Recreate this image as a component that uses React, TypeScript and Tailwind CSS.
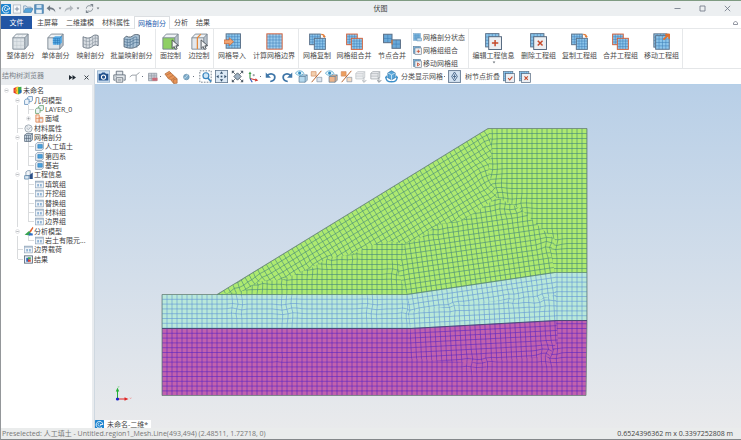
import { useState, type ReactNode } from 'react';

// ---------- Icons ----------
const Svg = ({ children, className = 'size-4' }: { children: ReactNode; className?: string }) => (
  <svg className={`shrink-0 ${className}`} viewBox="0 0 16 16" fill="none" aria-hidden="true">
    {children}
  </svg>
);

type GridProps = { x: number; y: number; s: number; n?: number; fill?: string; line?: string; edge?: string };

const GridBox = ({ x, y, s, n = 4, fill = '#8cc6ec', line = '#3d7db5', edge = '#5a7088' }: GridProps) => {
  let d = '';
  for (let i = 1; i < n; i++) {
    const o = (s / n) * i;
    d += `M${x + o} ${y}v${s}M${x} ${y + o}h${s}`;
  }
  return (
    <>
      <rect x={x} y={y} width={s} height={s} fill={fill} />
      <path d={d} stroke={line} strokeWidth="0.5" />
      <rect x={x} y={y} width={s} height={s} stroke={edge} strokeWidth="0.9" />
    </>
  );
};

const CubeShell = ({ front = '#dfe4e8' }: { front?: string }) => (
  <>
    <path d="M0.8 4.5 4 1h11.2v10.5L12 15.2H0.8z" fill="#eef1f4" />
    <path d="M0.8 4.5H12v10.7H0.8z" fill={front} />
    <path d="M12 4.5 15.2 1v10.5L12 15.2z" fill="#b9c3cc" />
    <path d="M0.8 4.5 4 1h11.2v10.5L12 15.2H0.8zM0.8 4.5H12v10.7M12 4.5 15.2 1" stroke="#76828e" strokeWidth="0.8" />
  </>
);

const WholeMeshIcon = () => (
  <Svg className="size-[17px]">
    <CubeShell />
    <path d="M4.5 4.5v10.7M8.3 4.5v10.7M0.8 8H12M0.8 11.6H12M4.5 4.5l3-3.5M8.3 4.5l3-3.5" stroke="#b5bec6" strokeWidth="0.4" />
  </Svg>
);
const SingleMeshIcon = () => (
  <Svg className="size-[17px]">
    <CubeShell />
    <path d="M5.5 5 7.5 3H14v6l-2 2H5.5z" fill="#58abe4" />
    <path d="M5.5 5H12v6M12 5l2-2M7.7 5v6M9.9 5v6M5.5 7H12M5.5 9H12" stroke="#2473b5" strokeWidth="0.5" />
  </Svg>
);
const SurfaceIcon = ({ fill, line }: { fill: string; line: string }) => (
  <Svg className="size-[17px]">
    <path d="M1 3.5C5 5.5 8 5 10.500 2.500 12.500 1.500 14 2 15.200 2.500V12C13 10.800 11.500 11 10 12.500 7 15 4 14.500 1 13.200z" fill={fill} stroke="#6c7884" strokeWidth="0.9" />
    <path d="M4 4.500v9.700M7 4.500v9.700M10 3v9.500M12.500 2v9.200M1 6.700c4 2 7 1.500 9.500-1 2-1.500 3.500-1 4.700-.5M1 10c4 2 7 1.500 9.500-1 2-1.500 3.500-1 4.700-.5" stroke={line} strokeWidth="0.6" />
  </Svg>
);
const BatchIcon = () => (
  <Svg className="size-[17px]">
    <path d="M3 3c3 1.500 5 1 7-1 2-1 4-.5 5.400 0v9l-3 2C9 15 5 14.500 1 13V5z" fill="#a9c2d6" stroke="#566573" strokeWidth="0.9" />
    <path d="M1 5.500c4 1.500 6 1 8-.5s3-1.500 4-1v10M4 5.500v8.500M6.700 5.500v8.500M9.500 4.500v9.300M1 8c4 1.500 6 1 8-.5s3-1.500 6-1M1 10.700c4 1.500 6 1 8-.5s3-1.500 6-1" stroke="#4b6f90" strokeWidth="0.6" />
  </Svg>
);
const Cursor = () => <path d="M9.500 6.500v8l2-1.800 1.300 2.900 1.500-.7-1.300-2.800 2.600-.2z" fill="#f4f5f6" stroke="#3d444b" strokeWidth="0.8" />;
const FaceControlIcon = () => (
  <Svg className="size-[17px]">
    <CubeShell front="#8ecf63" />
    <Cursor />
  </Svg>
);
const EdgeControlIcon = () => (
  <Svg className="size-[17px]">
    <CubeShell front="#e4e8ec" />
    <path d="M6 15V4.500L9.300 1" stroke="#e58a3c" strokeWidth="1.200" />
    <Cursor />
  </Svg>
);
const ImportIcon = () => (
  <Svg className="size-[17px]">
    <GridBox x={2} y={0.800} s={13.500} n={5} />
    <path d="M0 6.500h5V4.500l4 3.700-4 3.600V10H0z" fill="#f0a573" stroke="#cc5f2a" strokeWidth="0.6" />
  </Svg>
);
const BoundaryIcon = () => (
  <Svg className="size-[17px]">
    <GridBox x={0.800} y={0.800} s={14.400} n={5} edge="#d2603a" fill="#9bcbed" />
  </Svg>
);
const CopyGridIcon = () => (
  <Svg className="size-[17px]">
    <GridBox x={0.600} y={1} s={10} />
    <GridBox x={5} y={5} s={10.400} />
    <path d="M11.500 1.200c2.200 0 3 .8 3 2.500" stroke="#e07a35" strokeWidth="1.200" />
    <path d="M12.800 2.800h3l-1.400 2z" fill="#e07a35" />
  </Svg>
);
const MergeGridIcon = () => (
  <Svg className="size-[17px]">
    <GridBox x={0.600} y={1} s={10} edge="#d2603a" />
    <GridBox x={5} y={5} s={10.400} edge="#d2603a" />
  </Svg>
);
const NodeMergeIcon = () => (
  <Svg className="size-[18px]">
    <GridBox x={0.500} y={2} s={7.500} n={2} fill="#6aa9d8" />
    <GridBox x={8} y={7} s={7.500} n={2} fill="#6aa9d8" />
    <path d="M8 7v4" stroke="#e07a35" />
  </Svg>
);
const CardMarkIcon = ({ mark, className = 'size-[17px]' }: { mark: string; className?: string }) => (
  <Svg className={className}>
    <GridBox x={0.600} y={0.600} s={12.500} fill="#8cc6ec" />
    <rect x="3.500" y="3.500" width="12" height="12" fill="#eceff3" stroke="#51657c" strokeWidth="0.9" />
    <path d={mark} stroke="#c5492a" strokeWidth="1.400" />
  </Svg>
);
const PLUS = 'M9.500 6.500v6M6.500 9.500h6';
const CROSS = 'M7.300 7.300l4.500 4.500M11.800 7.300 7.300 11.800';
const CHECK = 'M6.800 9.500l2.200 2.300L12.500 7.500';
const PLAY = 'M8 7l4 2.700-4 2.700z';
const MoveGroupIcon = () => (
  <Svg className="size-[17px]">
    <GridBox x={0.800} y={0.800} s={12.500} />
    <GridBox x={2.500} y={2.500} s={12.800} />
    <path d="M9.800 6.200 15.500.8M11.500 1.500h3.800v3.800" stroke="#e2702c" strokeWidth="1.800" />
  </Svg>
);
const StateIcon = () => (
  <Svg className="size-[9px]">
    <GridBox x={1} y={1} s={12} n={3} fill="#79b4de" edge="#6f9fc4" />
    <path d="M7 9h8v5H7z" fill="#c3dff2" stroke="#5b8db5" />
  </Svg>
);

const LogoIcon = ({ className = 'size-[10px]' }: { className?: string }) => (
  <Svg className={className}>
    <rect width="16" height="16" rx="1" fill="#1d84cf" />
    <path d="M12.500 12.500A6 6 0 1 1 14 8H9" stroke="#fff" strokeWidth="1.500" />
    <path d="M10.800 8.500A2.800 2.800 0 1 1 8 5.200" stroke="#fff" strokeWidth="1.200" />
  </Svg>
);
const NewIcon = () => (
  <Svg className="size-[10px]">
    <rect x="2" y="1.500" width="12" height="13" fill="#f7f9fb" stroke="#97a6b5" />
    <path d="M8 4.500v7M4.500 8h7" stroke="#6e8196" strokeWidth="1.300" />
  </Svg>
);
const OpenIcon = () => (
  <Svg className="size-[10px]">
    <path d="M1 13V3h4l1.500 2H13v2" fill="#dfe8f0" stroke="#5f86a8" />
    <path d="M1 13.500 4 7h12l-3 6.500z" fill="#58a5da" stroke="#3c7cae" />
  </Svg>
);
const SaveIcon = () => (
  <Svg className="size-[10px]">
    <path d="M1 1h14v14H1z" fill="#5a93c2" stroke="#41749f" />
    <path d="M4 1.500h8v5H4z" fill="#cfe2f1" />
    <path d="M3.500 9h9v6h-9z" fill="#e9f1f7" />
  </Svg>
);
const ArrowBack = ({ color, flip }: { color: string; flip?: boolean }) => (
  <Svg className={flip ? 'size-[10px] -scale-x-100' : 'size-[10px]'}>
    <path d="M6.500 2 1 6.800l5.500 4.700V8.500c4 0 6.500 1.500 8.500 5 0-5-3-8-8.500-8.300z" fill={color} />
  </Svg>
);
const SyncIcon = () => (
  <Svg className="size-[9px]">
    <path d="M2.500 8c0-4 4-6.500 8.500-4M13.500 8c0 4-4 6.500-8.500 4" stroke="#7c858e" strokeWidth="1.700" />
    <path d="M9 0h5.500v6zM7 16H1.500v-6z" fill="#7c858e" />
  </Svg>
);
const Caret = () => (
  <Svg className="h-[3px] w-1">
    <path d="M1 3h14l-7 10z" fill="#6d747b" />
  </Svg>
);

// ---------- View toolbar icons ----------
const CameraIcon = () => (
  <Svg className="size-[13px]">
    <rect x="0.500" y="1" width="15" height="14" fill="#cfe2f4" stroke="#8aa9c8" />
    <path d="M2 4.500h3L6.500 3h3L11 4.500h3v8.500H2z" fill="#20508c" />
    <circle cx="8" cy="8.700" r="3.200" fill="#fff" />
    <circle cx="8" cy="8.700" r="2" fill="#20508c" />
  </Svg>
);
const PrinterIcon = () => (
  <Svg className="size-[13px]">
    <path d="M4 6V1.500h8V6M3 12.500H1V6h14v6.500h-2" fill="#e5e9ed" stroke="#5a6672" />
    <path d="M4 9.500h8V15H4z" fill="#fff" stroke="#5a6672" />
    <path d="M5.500 11.500h5M5.500 13.200h5M3 7.800h1.500" stroke="#5a6672" strokeWidth="0.7" />
  </Svg>
);
const ElbowIcon = () => (
  <Svg className="size-[12px]">
    <path d="M1 8l3-2.500h5.500L14 2M9.500 5.500V14" stroke="#9aa1a8" strokeWidth="1.300" />
  </Svg>
);
const FilterIcon = () => (
  <Svg className="size-[12px]">
    <path d="M2 3h11v10H2z" fill="#c6ccd4" stroke="#8d96a0" />
    <path d="M2 6.500h11M2 10h11M6 3v10M9.500 3v10" stroke="#8d96a0" strokeWidth="0.7" />
    <path d="M7 9h7v4H7z" fill="#c96b79" />
  </Svg>
);
const PlanesIcon = () => (
  <Svg className="size-[14px]">
    <path d="M1 4.500 6 1.500l9 8.500v5l-4 .5L7.500 11 5 10z" fill="#e99558" stroke="#a9683c" strokeWidth="0.8" />
    <path d="M2.500 6 8 3.300M5 9l5.500-3M8 11.500l5-3.200M11 15v-4l4-1" stroke="#a9683c" strokeWidth="0.7" />
  </Svg>
);
const SphereIcon = () => (
  <Svg className="size-[10px]">
    <circle cx="7" cy="8" r="4.500" fill="#7eaccb" stroke="#5d87a3" />
    <path d="M3 10c3-1 5-3 6-6" stroke="#d6e8f3" strokeWidth="1.200" />
  </Svg>
);
const ZoomBoxIcon = () => (
  <Svg className="size-[13px]">
    <rect x="1" y="1" width="14" height="14" stroke="#5d6a77" strokeDasharray="2 1.500" />
    <circle cx="8.500" cy="7" r="3.600" fill="#cfe6f6" stroke="#3a86c0" strokeWidth="1.500" />
    <path d="m11 10 4 4.500" stroke="#3a86c0" strokeWidth="2" />
  </Svg>
);
const FitIcon = () => (
  <Svg className="size-[13px]">
    <rect x="0.500" y="0.500" width="15" height="15" fill="#dce9f5" stroke="#62788f" />
    <path d="M8 1.500l2 3H6zM8 14.500l2-3H6zM1.500 8l3-2v4zM14.500 8l-3-2v4z" fill="#34506c" />
    <path d="M7 7h2v2H7z" fill="#34506c" />
  </Svg>
);
const PanIcon = () => (
  <Svg className="size-[13px]">
    <path d="M8 3.500 12.500 8 8 12.500 3.500 8z" fill="#9fb1c2" stroke="#4b5763" />
    <path d="M1 1h3.500L1 4.500zM15 1h-3.500L15 4.500zM1 15h3.500L1 11.500zM15 15h-3.500l3.500-3.500z" fill="#4b5763" />
    <path d="m1.500 1.500 4 4M14.500 1.500l-4 4M1.500 14.500l4-4M14.500 14.500l-4-4" stroke="#4b5763" />
  </Svg>
);
const AxesIcon = () => (
  <Svg className="size-[12px]">
    <path d="M4 10V3" stroke="#3e9c48" strokeWidth="1.500" />
    <path d="m4 10 8 2" stroke="#d23b33" strokeWidth="1.500" />
    <path d="m4 10 3 5" stroke="#2f58b8" strokeWidth="1.500" />
    <path d="M2 4l2-3.500L6 4z" fill="#3e9c48" />
    <path d="M11.500 9.500l3.500 3-4.500 1.500z" fill="#d23b33" />
    <path d="M9 4v3M7.500 5.500h3" stroke="#7b848c" />
  </Svg>
);
const RotateIcon = ({ flip }: { flip?: boolean }) => (
  <Svg className={flip ? 'size-[12px] -scale-x-100' : 'size-[12px]'}>
    <path d="M3 6c5-4 11-1.500 10 3.500-.5 2.500-2.500 4-6 4.500" stroke="#3f76a8" strokeWidth="2.300" />
    <path d="M1 2v7h7z" fill="#3f76a8" />
  </Svg>
);
const EyeCubeIcon = ({ body }: { body: string }) => (
  <Svg className="size-[13px]">
    <path d="M5 8l2.500-2H15v6.500L12.500 15H5z" fill={body} stroke="#5f7f9b" strokeWidth="0.9" />
    <path d="M5 8h7.500v7M12.500 8 15 6" stroke="#5f7f9b" strokeWidth="0.9" />
    <path d="M0.500 4c2.500-4 8-4 10.500 0-2.500 3.500-8 3.500-10.500 0z" fill="#e8f5fb" stroke="#4aa0cb" strokeWidth="0.900" />
    <circle cx="5.700" cy="3.800" r="1.900" fill="#2f8bc0" />
  </Svg>
);
const SwapIcon = ({ a, b }: { a: string; b: string }) => (
  <Svg className="size-[13px]">
    <path d="M1.500 2h6v5.500h-6z" fill={a} stroke="#d08a5e" strokeWidth="0.8" />
    <path d="M8.500 9h6v5.500h-6z" fill={b} stroke="#7f90a3" strokeWidth="0.8" />
    <path d="M14 1 2 15" stroke="#b5632f" strokeWidth="1.200" />
  </Svg>
);
const GrayCubeIcon = ({ edge }: { edge: string }) => (
  <Svg className="size-[13px]">
    <path d="M1 4l2.500-2H12v7l-2 2H1z" fill="#eceef0" stroke={edge} />
    <path d="M1 4.500h9V11M10 4.500 12 2M1 7.500h9" stroke={edge} strokeWidth="0.8" />
    <path d="M11 8.500v6M9 12.500l2 2.500 3-2.500" stroke={edge} strokeWidth="1.300" />
  </Svg>
);
const BlueCubeIcon = () => (
  <Svg className="size-[13px]">
    <path d="M8 1l4.500 2.500v6L8 12 3.500 9.500v-6z" fill="#58a6da" stroke="#2d6e9f" strokeWidth="0.8" />
    <path d="M3.500 3.500 8 6l4.500-2.500M8 6v6" stroke="#e3f1fa" strokeWidth="0.9" />
    <path d="M1 8.500c0 4 3 6 7 6s7-2 7-6" stroke="#3b8fc9" strokeWidth="1.700" />
    <path d="M0 9.500 1.500 6.500l2 3zM12.500 9.500l2-3L16 9.500z" fill="#3b8fc9" />
  </Svg>
);
const FoldIcon = () => (
  <Svg className="size-[13px]">
    <rect x="0.700" y="0.700" width="14.600" height="14.600" fill="#d4e3f2" stroke="#6b8098" strokeWidth="1.200" />
    <path d="M8 2.500 11.500 8 8 13.500 4.500 8z" stroke="#4f6d8f" strokeWidth="1.200" />
    <path d="M8 5.500v5M6 8h4" stroke="#4f6d8f" strokeWidth="1.200" />
  </Svg>
);

// ---------- Tree icons ----------
const RootIcon = () => (
  <Svg className="size-[9px]">
    <path d="M1 4 8 1v14L1 12z" fill="#e2382c" />
    <path d="M5 2.500 11 1v14l-6-2z" fill="#f4d22f" />
    <path d="M9 2l6-.5V11l-6 4z" fill="#3da84c" />
    <path d="M11.500 7H15v5l-3.500 2z" fill="#2769c0" />
    <circle cx="5" cy="8" r="2.300" fill="#ef8a2b" />
  </Svg>
);
const BoxesIcon = ({ color }: { color: string }) => (
  <Svg className="size-[9px]">
    <path d="M6 3.500 8 1h7v7l-2.500 2H6z" fill="#eef4fa" stroke={color} strokeWidth="1.300" />
    <path d="M1 8l2-2.500h6V13l-2 2H1z" fill="#eef4fa" stroke={color} strokeWidth="1.300" />
  </Svg>
);
const RegionIcon = () => (
  <Svg className="size-[9px]">
    <path d="M1.500 1.500h6v13h-6z" fill="#fbe3d2" stroke="#dc7a45" strokeWidth="1.300" />
    <path d="M7.500 6h6.500v8.500H7.500z" fill="#e6ecf2" stroke="#dc7a45" strokeWidth="1.300" />
    <path d="M1.500 8h12" stroke="#dc7a45" />
  </Svg>
);
const MaterialIcon = () => (
  <Svg className="size-[9px]">
    <circle cx="8" cy="8" r="6.500" fill="#eef1f4" stroke="#8d99a5" strokeWidth="1.300" />
    <path d="M4.500 7.500 8 10l4-5M5 4l2 2" stroke="#8d99a5" strokeWidth="1.200" />
  </Svg>
);
const MeshIcon = () => (
  <Svg className="size-[9px]">
    <path d="M1 4 4 1h11v11l-3 3H1z" fill="#d3dfea" stroke="#46586b" strokeWidth="1.200" />
    <path d="M1 4h11v11M12 4l3-3M4.700 4v11M8.300 4v11M1 9.500h11" stroke="#46586b" strokeWidth="1.100" />
  </Svg>
);
const PartIcon = () => (
  <Svg className="size-[9px]">
    <path d="M1 4 4 1h11v11l-3 3H1z" fill="#e7edf3" stroke="#71879c" strokeWidth="1.100" />
    <path d="M5 4.500h8V11H5z" fill="#4ba3df" stroke="#2b78b4" />
  </Svg>
);
const ProjectIcon = () => (
  <Svg className="size-[10px]">
    <path d="M3 7V3l3-2h4v8H3z" fill="#f0f4f8" stroke="#5d7a96" />
    <path d="M1 9h7v5.500H1z" fill="#dbe8f3" stroke="#3c6d96" />
    <path d="M9 8l5-4v10.500H9z" fill="#2b4f87" />
  </Svg>
);
const GroupIcon = () => (
  <Svg className="h-[9px] w-[9px]">
    <rect x="0.700" y="2" width="14.600" height="12" fill="#eef3f8" stroke="#8fa5bb" strokeWidth="1.200" />
    <path d="M1 3.500h14" stroke="#8fa5bb" strokeWidth="1.700" />
    <path d="M4 7h3v4.500H4zM9 7h3v4.500H9z" fill="#8fb2d4" />
  </Svg>
);
const AnalysisIcon = () => (
  <Svg className="size-[10px]">
    <path d="M8 9 14 1l1 2-4 7z" fill="#e2602c" />
    <path d="M1 14 8 8l3 3-2 4z" fill="#38a350" />
    <path d="M9 11l5 1v3H7z" fill="#2f6cc4" />
  </Svg>
);
const ResultIcon = () => (
  <Svg className="size-[9px]">
    <rect x="1" y="1.500" width="14" height="13" fill="#e9eef3" stroke="#57697b" strokeWidth="1.500" />
    <path d="M4 5h5v7H4z" fill="#2c66bf" />
    <path d="M7 4h5v4H7z" fill="#3fa75a" />
    <path d="M7 8h5v4H7z" fill="#e0402f" />
  </Svg>
);

// ---------- Ribbon ----------
const TABS = ['主屏幕', '二维建模', '材料属性', '网格剖分', '分析', '结果'];

const Tool = ({ label, width, icon, menu }: { label: string; width: string; icon: ReactNode; menu?: boolean }) => (
  <button type="button" className={`flex flex-col items-center pt-[3px] whitespace-nowrap hover:bg-sky-50 ${width}`}>
    <span className="flex h-[18px] items-center">{icon}</span>
    <span className="leading-[11px]">{label}</span>
    {menu && <Caret />}
  </button>
);

const SmallTool = ({ label, icon }: { label: string; icon: ReactNode }) => (
  <button type="button" className="flex items-center gap-px leading-[13px] whitespace-nowrap">
    {icon}
    <span>{label}</span>
  </button>
);

const Group = ({ children }: { children: ReactNode }) => (
  <div className="flex shrink-0 border-r border-[#e6e8ea]">{children}</div>
);

const Ribbon = () => (
  <div className="flex h-10 shrink-0 border-b border-[#e4e6e8] bg-white pl-[2px] text-[#4c4c4c]">
    <Group>
      <Tool label="整体剖分" width="w-[35px]" icon={<WholeMeshIcon />} />
      <Tool label="单体剖分" width="w-[35px]" icon={<SingleMeshIcon />} />
      <Tool label="映射剖分" width="w-[35px]" icon={<SurfaceIcon fill="#d9dee3" line="#8b96a1" />} />
      <Tool label="批量映射剖分" width="w-[47px]" icon={<BatchIcon />} />
    </Group>
    <Group>
      <Tool label="面控制" width="w-[29px]" icon={<FaceControlIcon />} />
      <Tool label="边控制" width="w-[28px]" icon={<EdgeControlIcon />} />
    </Group>
    <Group>
      <Tool label="网格导入" width="w-[36px]" icon={<ImportIcon />} />
      <Tool label="计算网格边界" width="w-[48px]" icon={<BoundaryIcon />} />
    </Group>
    <Group>
      <Tool label="网格复制" width="w-[36px]" icon={<CopyGridIcon />} />
      <Tool label="网格组合并" width="w-[38px]" icon={<MergeGridIcon />} />
      <Tool label="节点合并" width="w-[38px]" icon={<NodeMergeIcon />} />
    </Group>
    <Group>
      <div className="flex w-14 flex-col pt-[2px] pl-px">
        <SmallTool label="网格剖分状态" icon={<StateIcon />} />
        <SmallTool label="网格组组合" icon={<CardMarkIcon mark={PLUS} className="size-[9px]" />} />
        <SmallTool label="移动网格组" icon={<CardMarkIcon mark={PLAY} className="size-[9px]" />} />
      </div>
    </Group>
    <Group>
      <Tool label="编辑工程信息" width="w-[49px]" icon={<CardMarkIcon mark={PLUS} />} menu />
      <Tool label="删除工程组" width="w-[41px]" icon={<CardMarkIcon mark={CROSS} />} />
      <Tool label="复制工程组" width="w-[41px]" icon={<CopyGridIcon />} />
      <Tool label="合并工程组" width="w-[41px]" icon={<MergeGridIcon />} />
      <Tool label="移动工程组" width="w-[41px]" icon={<MoveGroupIcon />} />
    </Group>
  </div>
);

const ViewButton = ({ name, children, menu }: { name: string; children: ReactNode; menu?: boolean }) => (
  <button
    type="button"
    aria-label={name}
    className={`flex h-full shrink-0 items-center justify-center ${menu ? 'w-[18px]' : 'w-[16px]'}`}
  >
    {children}
    {menu && <span className="ml-px size-px bg-gray-500" />}
  </button>
);

const ViewToolbar = () => (
  <div className="flex h-4 shrink-0 items-center border-b border-[#b4cfe8] bg-white text-[#4c4c4c]">
    <ViewButton name="截图"><CameraIcon /></ViewButton>
    <ViewButton name="打印"><PrinterIcon /></ViewButton>
    <ViewButton name="选择" menu><ElbowIcon /></ViewButton>
    <ViewButton name="过滤" menu><FilterIcon /></ViewButton>
    <ViewButton name="平面"><PlanesIcon /></ViewButton>
    <ViewButton name="渲染" menu><SphereIcon /></ViewButton>
    <ViewButton name="框选缩放"><ZoomBoxIcon /></ViewButton>
    <ViewButton name="适应窗口"><FitIcon /></ViewButton>
    <ViewButton name="平移"><PanIcon /></ViewButton>
    <ViewButton name="坐标系" menu><AxesIcon /></ViewButton>
    <ViewButton name="逆时针旋转"><RotateIcon /></ViewButton>
    <ViewButton name="顺时针旋转"><RotateIcon flip /></ViewButton>
    <div className="flex h-full shrink-0 items-center gap-[2px]">
      <EyeCubeButton name="显示几何" body="#b5d9ee" />
      <SwapButton name="切换几何" a="#f3cfae" b="#dfe6ee" />
      <EyeCubeButton name="显示网格" body="#efb489" />
      <SwapButton name="切换网格" a="#ee9f5f" b="#f7dcc3" />
      <button type="button" aria-label="隐藏"><GrayCubeIcon edge="#c3c7cb" /></button>
      <button type="button" aria-label="隔离"><GrayCubeIcon edge="#a4aaaf" /></button>
      <button type="button" aria-label="视图方向"><BlueCubeIcon /></button>
    </div>
    <button type="button" className="ml-[3px] flex shrink-0 items-center gap-px whitespace-nowrap">
      分类显示网格
      <span className="size-px bg-gray-500" />
    </button>
    <span className="mx-px shrink-0">
      <ViewButton name="折叠"><FoldIcon /></ViewButton>
    </span>
    <span className="mr-px ml-[2px] shrink-0">树节点折叠</span>
    <ViewButton name="确认"><CardMarkIcon mark={CHECK} className="size-[12px]" /></ViewButton>
    <ViewButton name="取消"><CardMarkIcon mark={CROSS} className="size-[12px]" /></ViewButton>
  </div>
);

const EyeCubeButton = ({ name, body }: { name: string; body: string }) => (
  <button type="button" aria-label={name}><EyeCubeIcon body={body} /></button>
);
const SwapButton = ({ name, a, b }: { name: string; a: string; b: string }) => (
  <button type="button" aria-label={name}><SwapIcon a={a} b={b} /></button>
);

// ---------- Structure tree ----------
// guides: one letter per indent column. r/m = expanded, p = collapsed, t = branch, l = last branch, i = line, _ = blank
const TREE: { label: string; guides: string; icon: ReactNode }[] = [
  { label: '未命名', guides: 'r', icon: <RootIcon /> },
  { label: '几何模型', guides: '_m', icon: <BoxesIcon color="#5484b4" /> },
  { label: 'LAYER_0', guides: '_it', icon: <BoxesIcon color="#5c9a62" /> },
  { label: '面域', guides: '_ip', icon: <RegionIcon /> },
  { label: '材料属性', guides: '_t', icon: <MaterialIcon /> },
  { label: '网格剖分', guides: '_m', icon: <MeshIcon /> },
  { label: '人工填土', guides: '_it', icon: <PartIcon /> },
  { label: '第四系', guides: '_it', icon: <PartIcon /> },
  { label: '基岩', guides: '_il', icon: <PartIcon /> },
  { label: '工程信息', guides: '_m', icon: <ProjectIcon /> },
  { label: '填筑组', guides: '_it', icon: <GroupIcon /> },
  { label: '开挖组', guides: '_it', icon: <GroupIcon /> },
  { label: '替换组', guides: '_it', icon: <GroupIcon /> },
  { label: '材料组', guides: '_it', icon: <GroupIcon /> },
  { label: '边界组', guides: '_il', icon: <GroupIcon /> },
  { label: '分析模型', guides: '_m', icon: <AnalysisIcon /> },
  { label: '岩土有限元...', guides: '_il', icon: <GroupIcon /> },
  { label: '边界载荷', guides: '_t', icon: <GroupIcon /> },
  { label: '结果', guides: '_l', icon: <ResultIcon /> },
];

const Guide = ({ kind }: { kind: string }) => {
  if (kind === '_') return <span className="w-[11px] shrink-0" />;
  if (kind === 'm' || kind === 'p' || kind === 'r') {
    return (
      <button type="button" aria-label={kind === 'p' ? '展开' : '折叠'} className="flex w-[11px] shrink-0 items-center justify-center">
        <svg className="size-[5px]" viewBox="0 0 10 10" fill="none">
          <circle cx="5" cy="5" r="4" fill="#fff" stroke="#c6c9cc" />
          <path d={kind === 'p' ? 'M2.500 5h5M5 2.500v5' : 'M2.500 5h5'} stroke="#8a8f94" strokeWidth="1.200" />
        </svg>
      </button>
    );
  }
  return (
    <span className="flex w-[11px] shrink-0 pl-[5px]">
      <span className={`w-px bg-[#d9dbdd] ${kind === 'l' ? 'h-1/2' : 'h-full'}`} />
      {kind !== 'i' && <span className="h-px flex-1 self-center bg-[#d9dbdd]" />}
    </span>
  );
};

const Sidebar = () => (
  <aside className="flex w-[94px] shrink-0 flex-col border-r border-[#cfd8e0] bg-[#e9ecef]">
    <div className="flex h-4 shrink-0 items-center pr-[2px] pl-px text-[#7a8189]">
      <h2 className="flex-1 pb-1">结构树浏览器</h2>
      <button type="button" aria-label="自动隐藏" className="flex w-4 justify-center">
        <svg className="h-[5px] w-[7px]" viewBox="0 0 14 10">
          <path d="M0 0 7 5V0l7 5-7 5V5l-7 5z" fill="#1f2933" />
        </svg>
      </button>
      <button type="button" aria-label="关闭" className="flex w-3 justify-center">
        <svg className="size-[5px]" viewBox="0 0 10 10">
          <path d="m1 1 8 8M9 1 1 9" stroke="#3c444c" strokeWidth="2" />
        </svg>
      </button>
    </div>
    <div className="mr-[2px] flex-1 bg-white pt-px text-[#3c3c3c]">
      <ul className="grid h-[178px] auto-rows-fr">
        {TREE.map((node) => (
          <li key={node.label} className="flex min-h-0">
            {node.guides.split('').map((kind, i) => (
              <Guide key={i} kind={kind} />
            ))}
            <span className="flex w-[11px] shrink-0 items-center justify-center">{node.icon}</span>
            <span className="self-center leading-[9px] whitespace-nowrap">{node.label}</span>
          </li>
        ))}
      </ul>
    </div>
  </aside>
);

// ---------- Mesh ----------
type Pt = [number, number];
type Zone = {
  id: string;
  poly: Pt[];
  angle: number; // degrees
  origin: Pt;
  step: Pt;
  stroke: string;
};

// irregular nodes: x, y, radius, twist
const KNOTS: [number, number, number, number][] = [
  [487, 172, 9, 0.35], [494, 190, 8, -0.4], [488, 140, 6, 0.3],
  [551, 243, 7, 0.7], [520, 208, 7, -0.4], [505, 205, 7, 0.4],
  [238, 287, 6, 0.5], [259, 281, 6, -0.5], [283, 279, 5, 0.4],
  [312, 266, 6, -0.4], [328, 258, 5, 0.5], [352, 254, 5, -0.4],
  [395, 272, 7, 0.3], [237, 308, 6, 0.4], [288, 309, 8, -0.35],
  [371, 308, 8, 0.25], [407, 311, 6, 0.4], [452, 305, 6, -0.5],
  [512, 299, 6, 0.4], [541, 299, 7, -0.5], [549, 353, 7, 0.8],
  [472, 362, 6, 0.4], [486, 360, 5, -0.4], [281, 361, 4, 0.3],
  [435, 232, 6, 0.3], [460, 220, 6, -0.3],
];

const GREEN_LINE = '#3b7f7c';
const CYAN_LINE = '#5a90d6';
const MAGENTA_LINE = '#5522c4';

const ZONES: Zone[] = [
  {
    id: 'slope', angle: -31.500, origin: [488, 128], step: [5, 5], stroke: GREEN_LINE,
    poly: [[217, 294], [488, 128], [492, 150], [488, 172], [495, 188], [497, 197], [484, 206], [462, 220], [438, 224], [420, 238], [405, 243], [390, 241], [370, 245], [352, 254], [328, 258], [312, 267], [283, 279], [259, 281], [246, 290]],
  },
  {
    id: 'crest', angle: 0, origin: [587, 128], step: [5, 5], stroke: GREEN_LINE,
    poly: [[488, 128], [587, 128], [587, 272], [555, 272], [550, 250], [556, 240], [544, 230], [535, 222], [520, 208], [497, 197], [495, 188], [488, 172], [492, 150]],
  },
  {
    id: 'core', angle: -8.500, origin: [407, 294], step: [5, 5], stroke: GREEN_LINE,
    poly: [[407, 294], [398, 272], [405, 243], [420, 238], [438, 224], [462, 220], [484, 206], [497, 197], [520, 208], [535, 222], [544, 230], [556, 240], [550, 250], [555, 272]],
  },
  {
    id: 'toe', angle: 0, origin: [407, 294], step: [5, 5], stroke: GREEN_LINE,
    poly: [[217, 294], [246, 290], [259, 281], [283, 279], [312, 267], [328, 258], [352, 254], [370, 245], [390, 241], [405, 243], [398, 272], [407, 294]],
  },
  {
    id: 'soil-left', angle: 0, origin: [162, 294], step: [5, 4.800], stroke: CYAN_LINE,
    poly: [[162, 294], [407, 294], [410, 328], [162, 328]],
  },
  {
    id: 'soil-upper', angle: -8.500, origin: [407, 294], step: [5, 5], stroke: CYAN_LINE,
    poly: [[407, 294], [555, 272], [556, 294], [541, 299], [512, 299], [452, 305], [408, 312]],
  },
  {
    id: 'soil-lower', angle: -3, origin: [410, 328], step: [5, 5], stroke: CYAN_LINE,
    poly: [[408, 312], [452, 305], [512, 299], [541, 299], [556, 294], [556, 320], [410, 328]],
  },
  {
    id: 'soil-right', angle: 0, origin: [587, 272], step: [5, 4.800], stroke: CYAN_LINE,
    poly: [[555, 272], [587, 272], [587, 320], [556, 320]],
  },
  {
    id: 'rock-left', angle: 0, origin: [162, 328], step: [5, 4.800], stroke: MAGENTA_LINE,
    poly: [[162, 328], [410, 328], [410, 358], [470, 362], [549, 356], [558, 340], [556, 320], [587, 320], [586, 395], [162, 395]],
  },
  {
    id: 'rock-right', angle: -3, origin: [410, 328], step: [5, 4.800], stroke: MAGENTA_LINE,
    poly: [[410, 328], [556, 320], [558, 340], [549, 356], [470, 362], [410, 358]],
  },
];

const toPoints = (poly: Pt[]) => poly.map((p) => p.join(',')).join(' ');

const twist = (x: number, y: number): Pt => {
  let px = x;
  let py = y;
  for (const [cx, cy, r, a] of KNOTS) {
    const dx = px - cx;
    const dy = py - cy;
    const t = a * Math.exp(-(dx * dx + dy * dy) / (r * r));
    if (Math.abs(t) < 0.01) continue;
    px = cx + dx * Math.cos(t) - dy * Math.sin(t);
    py = cy + dx * Math.sin(t) + dy * Math.cos(t);
  }
  return [px, py];
};

const meshPath = ({ poly, angle, origin, step }: Zone) => {
  const rad = (angle * Math.PI) / 180;
  const cos = Math.cos(rad);
  const sin = Math.sin(rad);
  // bounds of the zone in its own rotated frame
  const local = poly.map(([x, y]) => {
    const dx = x - origin[0];
    const dy = y - origin[1];
    return [dx * cos + dy * sin, -dx * sin + dy * cos];
  });
  const us = local.map((p) => p[0]);
  const vs = local.map((p) => p[1]);
  const u0 = Math.floor(Math.min(...us) / step[0]) - 1;
  const u1 = Math.ceil(Math.max(...us) / step[0]) + 1;
  const v0 = Math.floor(Math.min(...vs) / step[1]) - 1;
  const v1 = Math.ceil(Math.max(...vs) / step[1]) + 1;
  const at = (i: number, j: number) => {
    const u = i * step[0];
    const v = j * step[1];
    const [x, y] = twist(origin[0] + u * cos - v * sin, origin[1] + u * sin + v * cos);
    return `${x.toFixed(1)} ${y.toFixed(1)}`;
  };
  let d = '';
  for (let i = u0; i <= u1; i++) {
    for (let j = v0; j <= v1; j++) d += (j === v0 ? 'M' : 'L') + at(i, j);
  }
  for (let j = v0; j <= v1; j++) {
    for (let i = u0; i <= u1; i++) d += (i === u0 ? 'M' : 'L') + at(i, j);
  }
  return d;
};

const MeshView = () => (
  <svg className="min-h-0 w-full flex-1" viewBox="95 85 646 334" fill="none" role="img" aria-label="网格模型">
    <defs>
      {ZONES.map((zone) => (
        <clipPath key={zone.id} id={zone.id}>
          <polygon points={toPoints(zone.poly)} />
        </clipPath>
      ))}
    </defs>
    <polygon points="217,294 488,128 587,128 587,272 555,272 407,294" fill="#aeea70" />
    <polygon points="162,294 407,294 555,272 587,272 587,320 556,320 410,328 162,328" fill="#b9e8d9" />
    <polygon points="162,328 410,328 556,320 587,320 586,395 162,395" fill="#c062ae" />
    {ZONES.map((zone) => (
      <g key={zone.id} clipPath={`url(#${zone.id})`}>
        <path d={meshPath(zone)} stroke={zone.stroke} strokeWidth="0.7" strokeOpacity="0.8" />
      </g>
    ))}
    <path d="M162 294H217L488 128H587V320L586 395H162z" stroke="#6d8578" strokeWidth="0.8" />
    <path d="M217 294H407L555 272H587" stroke="#5c8a6c" strokeWidth="0.8" />
    <path d="M162 328H410L556 320H587" stroke="#4d4a78" />

    {/* coordinate axes */}
    <path d="M117.500 398.500V390" stroke="#22b034" />
    <path d="M115.800 391h3.400l-1.700-4z" fill="#22b034" />
    <path d="M117.500 398.500h8" stroke="#e02222" />
    <path d="M124.500 396.800v3.400l4-1.700z" fill="#e02222" />
    <circle cx="117.500" cy="398.500" r="1.600" fill="#1822c8" />
    <path d="m117.800 385.500.8 1 .8-1M118.600 386.500v1" stroke="#7fd08a" strokeWidth="0.5" />
    <path d="m129.800 397 1.500 1.500M131.300 397l-1.500 1.500" stroke="#ee8888" strokeWidth="0.5" />
  </svg>
);

export default function App() {
  const [activeTab, setActiveTab] = useState('网格剖分');

  return (
    <div className="flex h-screen flex-col overflow-hidden border-t border-b border-l border-t-[#7f9b82] border-b-[#84888a] border-l-[#94979a] bg-[#eceff1] font-['Open_Sans','Noto_Sans_CJK_SC',sans-serif] text-[7px] leading-[9px]">
      {/* Title bar */}
      <header className="flex h-[15px] shrink-0 items-center bg-[#eceff1] text-[#444]">
        <div className="flex flex-1 items-center gap-px">
          <LogoIcon />
          <button type="button" aria-label="新建"><NewIcon /></button>
          <button type="button" aria-label="打开"><OpenIcon /></button>
          <button type="button" aria-label="保存"><SaveIcon /></button>
          <button type="button" aria-label="撤销" className="ml-px flex items-center gap-[2px]">
            <ArrowBack color="#707a84" />
            <Caret />
          </button>
          <button type="button" aria-label="重做" className="ml-px flex items-center gap-[2px]">
            <ArrowBack color="#b3b9be" flip />
            <Caret />
          </button>
          <button type="button" aria-label="刷新" className="ml-1"><SyncIcon /></button>
          <button type="button" aria-label="自定义工具栏" className="ml-px"><Caret /></button>
        </div>
        <h1 className="ml-5">伏图</h1>
        <div className="flex flex-1 justify-end pr-px text-gray-500">
          <button type="button" aria-label="最小化" className="flex w-[25px] justify-center">
            <svg className="size-[7px]" viewBox="0 0 7 7"><path d="M0.500 3.500h6" stroke="currentColor" strokeWidth="0.8" /></svg>
          </button>
          <button type="button" aria-label="最大化" className="flex w-[25px] justify-center">
            <svg className="size-[7px]" viewBox="0 0 7 7"><path d="M1 1h5v5H1z" fill="none" stroke="currentColor" strokeWidth="0.8" /></svg>
          </button>
          <button type="button" aria-label="关闭窗口" className="flex w-[25px] justify-center">
            <svg className="size-[7px]" viewBox="0 0 7 7"><path d="m.8.8 5.400 5.400M6.200.8.8 6.200" stroke="currentColor" strokeWidth="0.8" /></svg>
          </button>
        </div>
      </header>

      {/* Tabs */}
      <nav className="flex h-[13px] shrink-0 items-stretch bg-white text-[#444]">
        <button type="button" className="w-[31px] bg-[#2255a4] text-white">文件</button>
        <div className="flex flex-1 border-b border-[#e6e8ea] pl-px">
          {TABS.map((tab) => (
            <button
              key={tab}
              type="button"
              onClick={() => setActiveTab(tab)}
              className={
                tab === activeTab
                  ? '-mb-px border-x border-t border-[#dcdfe2] bg-white px-[3px] text-[#2b62b0]'
                  : 'px-1'
              }
            >
              {tab}
            </button>
          ))}
        </div>
        <button type="button" aria-label="折叠功能区" className="border-b border-[#e6e8ea] pr-[3px]">
          <svg className="size-[5px]" viewBox="0 0 10 10" fill="none">
            <path d="M1 6l4-4 4 4v3H1z" stroke="#6b7280" strokeWidth="1.500" />
          </svg>
        </button>
      </nav>

      <Ribbon />

      <div className="flex min-h-0 flex-1">
        <Sidebar />
        <main className="flex min-w-0 flex-1 flex-col">
          <ViewToolbar />
          <div className="flex min-h-0 flex-1 flex-col bg-linear-to-b from-[#b8cfe7] to-[#e9eaec]">
            <MeshView />
            <div className="flex h-2 shrink-0 overflow-hidden">
              <LogoIcon className="size-[9px]" />
              <button type="button" className="bg-white px-[3px] leading-[9px] text-[#444]">未命名-二维*</button>
            </div>
          </div>
        </main>
      </div>

      {/* Status bar */}
      <footer className="flex h-[11px] shrink-0 items-center justify-between bg-[#eaecec] pr-2 pl-px text-[#777]">
        <span>Preselected: 人工填土 - Untitled.region1_Mesh.Line(493,494) (2.48511, 1.72718, 0)</span>
        <span className="text-[#444]">0.6524396362 m x 0.3397252808 m</span>
      </footer>
    </div>
  );
}
